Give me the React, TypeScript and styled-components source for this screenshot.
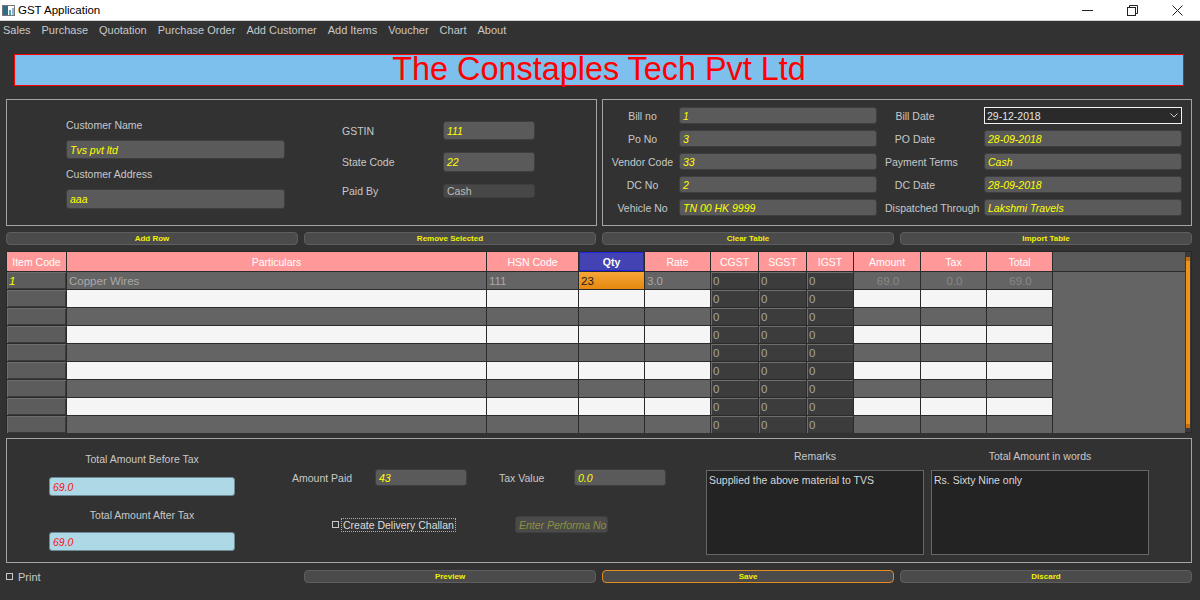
import React from 'react';
import styled, { createGlobalStyle } from 'styled-components';

const GlobalStyle = createGlobalStyle`
  html, body {
    margin: 0;
    padding: 0;
    background: #323232;
  }
  body {
    font-family: 'Liberation Sans', Arial, sans-serif;
  }
  * {
    box-sizing: border-box;
  }
`;

const Window = styled.div`
  width: 1200px;
  height: 600px;
  display: flex;
  flex-direction: column;
  background: #323232;
  overflow: hidden;
`;

/* ---------- title bar + menu ---------- */

const TitleBar = styled.div`
  height: 21px;
  flex-shrink: 0;
  background: #ffffff;
  border-bottom: 1px solid #d4d4d4;
  display: flex;
  align-items: center;
  padding-left: 2px;
`;

const TitleText = styled.span`
  font-size: 11.5px;
  color: #000;
  margin-left: 3px;
  flex: 1;
`;

const WinButton = styled.div`
  width: 45px;
  height: 20px;
  display: flex;
  align-items: center;
  justify-content: center;
  color: #111;
`;

const MenuBar = styled.nav`
  height: 17px;
  flex-shrink: 0;
  display: flex;
  align-items: center;
  gap: 11px;
  padding-left: 3px;
`;

const MenuItem = styled.span`
  font-size: 11px;
  color: #c8c8c8;
`;

/* ---------- page body ---------- */

const Main = styled.main`
  flex: 1;
  display: flex;
  flex-direction: column;
  padding: 16px 8px 0 6px;
`;

const Banner = styled.div`
  margin: 0 8px;
  height: 32px;
  background: #7dc0ee;
  border: 1px solid #ff0000;
  color: #ff0000;
  font-size: 32.4px;
  line-height: 29px;
  text-align: center;
  white-space: nowrap;
`;

const TopRow = styled.div`
  margin-top: 13px;
  display: grid;
  grid-template-columns: 591px 1fr;
  gap: 5px;
  height: 127px;
`;

const GroupBox = styled.section`
  border: 1px solid #a4a4a4;
  height: 100%;
`;

const CustomerPanel = styled(GroupBox)`
  display: flex;
  padding-left: 59px;
`;

const StackCol = styled.div<{ $w: number; $top: number }>`
  width: ${({ $w }) => $w}px;
  padding-top: ${({ $top }) => $top}px;
  display: flex;
  flex-direction: column;
`;

const Label = styled.span<{ $center?: boolean }>`
  font-size: 10.5px;
  line-height: 14px;
  color: #c8c8c8;
  white-space: nowrap;
  text-align: ${({ $center }) => ($center ? 'center' : 'left')};
`;

const Field = styled.div<{ $variant?: 'value' | 'plain' | 'blue' | 'hint'; $h?: number; $w?: number; $mt?: number }>`
  height: ${({ $h }) => $h ?? 17}px;
  width: ${({ $w }) => ($w ? `${$w}px` : 'auto')};
  margin-top: ${({ $mt }) => $mt ?? 0}px;
  flex-shrink: 0;
  display: flex;
  align-items: center;
  padding-left: 3px;
  font-size: 10.5px;
  white-space: nowrap;
  overflow: hidden;
  border-radius: 3px;
  border: 1px solid
    ${({ $variant }) => ($variant === 'blue' ? '#6f8a94' : '#3f3f3f')};
  background: ${({ $variant }) =>
    $variant === 'blue'
      ? '#add8e6'
      : $variant === 'plain'
        ? '#474747'
        : $variant === 'hint'
          ? '#4a4a4a'
          : '#5a5a5a'};
  color: ${({ $variant }) =>
    $variant === 'blue'
      ? '#ff1010'
      : $variant === 'plain'
        ? '#bdbdbd'
        : $variant === 'hint'
          ? '#8f8f3c'
          : '#ffff00'};
  font-style: ${({ $variant }) => ($variant === 'plain' ? 'normal' : 'italic')};
`;

const FormGrid = styled.div<{ $cols: string; $rows: string; $gap: number; $top: number }>`
  display: grid;
  grid-template-columns: ${({ $cols }) => $cols};
  grid-template-rows: ${({ $rows }) => $rows};
  row-gap: ${({ $gap }) => $gap}px;
  padding-top: ${({ $top }) => $top}px;
  align-items: center;
`;

const BillPanel = styled(GroupBox)`
  padding-left: 3px;
`;

const SideLabel = styled(Label)<{ $offset?: number; $w: number }>`
  display: block;
  width: ${({ $w }) => $w}px;
  margin-left: ${({ $offset }) => $offset ?? 0}px;
  text-align: center;
`;

const Combo = styled.div`
  height: 17px;
  border: 1px solid #f2f2f2;
  background: #2a2a2a;
  color: #e4e4e4;
  font-size: 10.5px;
  display: flex;
  align-items: center;
  justify-content: space-between;
  padding: 0 3px 0 2px;
`;

/* ---------- buttons ---------- */

const ButtonRow = styled.div`
  margin-top: 6px;
  display: grid;
  grid-template-columns: repeat(4, 1fr);
  gap: 6px;
  height: 13px;
  align-items: center;
`;

const ActionButton = styled.button<{ $focus?: boolean }>`
  height: 13px;
  padding: 0;
  border-radius: 4px;
  border: 1px solid ${({ $focus }) => ($focus ? '#e38b1f' : '#5e5e5e')};
  background: #4b4b4b;
  color: #f2f200;
  font-family: 'Liberation Sans', Arial, sans-serif;
  font-size: 8px;
  font-weight: 700;
  line-height: 11px;
`;

/* ---------- table ---------- */

const TableFrame = styled.div`
  margin-top: 6px;
  height: 182px;
  display: flex;
  border: 1px solid #2a2a2a;
  background: #2a2a2a;
`;

const Grid = styled.div`
  flex: 1;
  display: grid;
  grid-template-columns: 59px 419px 91px 65px 65px 47px 47px 46px 66px 65px 65px 1fr;
  grid-template-rows: 19px repeat(9, 17px);
  gap: 1px;
  background: #2b2b2b;
`;

const HeadCell = styled.div<{ $active?: boolean }>`
  display: flex;
  align-items: center;
  justify-content: center;
  font-size: 10.5px;
  color: #fff;
  background: ${({ $active }) => ($active ? '#4343b3' : '#ff9999')};
  font-weight: ${({ $active }) => ($active ? 700 : 400)};
  border: ${({ $active }) => ($active ? '1px solid #2323e6' : 'none')};
`;

const Filler = styled.div<{ $head?: boolean }>`
  background: ${({ $head }) => ($head ? '#5b5b5b' : '#646464')};
  grid-column: 12;
  grid-row: ${({ $head }) => ($head ? '1' : '2 / span 9')};
`;

const Cell = styled.div<{ $bg: string; $color?: string; $align?: string; $italic?: boolean; $inset?: boolean }>`
  display: flex;
  align-items: center;
  justify-content: ${({ $align }) => $align ?? 'flex-start'};
  padding-left: 2px;
  font-size: 11.5px;
  background: ${({ $bg }) => $bg};
  color: ${({ $color }) => $color ?? '#a8a8a8'};
  font-style: ${({ $italic }) => ($italic ? 'italic' : 'normal')};
  box-shadow: ${({ $inset }) => ($inset ? 'inset 1px 1px 0 #6e6e6e, inset -1px -1px 0 #3a3a3a' : 'none')};
`;

const ScrollTrack = styled.div`
  width: 6px;
  background: #3a3a3a;
  display: flex;
  padding: 3px 1px 2px;
`;

const ScrollThumb = styled.div`
  flex: 1;
  background: #f0921a;
  border-top: 2px solid #3a3a3a;
  border-bottom: 2px solid #3a3a3a;
  box-shadow: inset 0 4px 0 #c76f06, inset 0 -4px 0 #c76f06;
`;

/* ---------- totals ---------- */

const TotalsPanel = styled(GroupBox)`
  margin-top: 5px;
  height: 125px;
  display: flex;
  padding-left: 42px;
`;

const AmountRow = styled.div`
  display: flex;
  align-items: center;
  height: 17px;
`;

const ChallanRow = styled(AmountRow)`
  margin-top: 30px;
  padding-left: 40px;
`;

const CheckBox = styled.span`
  width: 7px;
  height: 7px;
  border: 1px solid #c8c8c8;
  flex-shrink: 0;
`;

const FocusLabel = styled.span`
  margin-left: 2px;
  border: 1px dotted #b0b0b0;
  font-size: 10.5px;
  line-height: 12px;
  padding: 0 1px;
  color: #dedede;
  white-space: nowrap;
`;

const TextArea = styled.div`
  margin-top: 7px;
  height: 85px;
  background: #232323;
  border: 1px solid #666;
  color: #d8d8d8;
  font-size: 10.5px;
  padding: 3px 2px;
`;

const FooterRow = styled.div`
  margin-top: 7px;
  display: grid;
  grid-template-columns: repeat(4, 1fr);
  gap: 6px;
  height: 13px;
  align-items: center;
`;

const PrintToggle = styled.div`
  display: flex;
  align-items: center;
  gap: 5px;
  font-size: 11px;
  color: #c8c8c8;
`;

const AppIcon = () => (
  <svg width="13" height="11" viewBox="0 0 13 11" aria-hidden="true">
    <rect x="0.5" y="0.5" width="12" height="10" fill="#fff" stroke="#777" />
    <rect x="1" y="1" width="5" height="9" fill="#2c6e8a" />
    <rect x="7" y="5" width="2" height="5" fill="#5aa0c0" />
    <rect x="10" y="3" width="2" height="7" fill="#8ab7c9" />
  </svg>
);

const Chevron = () => (
  <svg width="8" height="5" viewBox="0 0 8 5" aria-hidden="true">
    <path d="M0.5 0.5 L4 4 L7.5 0.5" fill="none" stroke="#c8c8c8" strokeWidth="1" />
  </svg>
);

const menu = ['Sales', 'Purchase', 'Quotation', 'Purchase Order', 'Add Customer', 'Add Items', 'Voucher', 'Chart', 'About'];

const billRows: [string, string, string, string][] = [
  ['Bill no', '1', 'Bill Date', '29-12-2018'],
  ['Po No', '3', 'PO Date', '28-09-2018'],
  ['Vendor Code', '33', 'Payment Terms', 'Cash'],
  ['DC No', '2', 'DC Date', '28-09-2018'],
  ['Vehicle No', 'TN 00 HK 9999', 'Dispatched Through', 'Lakshmi Travels'],
];

type Kind = 'code' | 'text' | 'qty' | 'spin' | 'num';
const columns: { title: string; kind: Kind }[] = [
  { title: 'Item Code', kind: 'code' },
  { title: 'Particulars', kind: 'text' },
  { title: 'HSN Code', kind: 'text' },
  { title: 'Qty', kind: 'qty' },
  { title: 'Rate', kind: 'text' },
  { title: 'CGST', kind: 'spin' },
  { title: 'SGST', kind: 'spin' },
  { title: 'IGST', kind: 'spin' },
  { title: 'Amount', kind: 'num' },
  { title: 'Tax', kind: 'num' },
  { title: 'Total', kind: 'num' },
];
const firstRow = ['1', 'Copper Wires', '111', '23', '3.0', '0', '0', '0', '69.0', '0.0', '69.0'];

const renderCell = (kind: Kind, row: number, col: number) => {
  const rowBg = row % 2 === 0 ? '#646464' : '#f5f5f5';
  const value = row === 0 ? firstRow[col] : '';
  const key = `${row}-${col}`;
  switch (kind) {
    case 'code':
      return (
        <Cell key={key} $bg="#5c5c5c" $color="#ffff00" $italic $inset>
          {value}
        </Cell>
      );
    case 'spin':
      return (
        <Cell key={key} $bg="#3c3c3c" $color="#a4a4a4" $inset>
          0
        </Cell>
      );
    case 'qty':
      return row === 0 ? (
        <Cell key={key} $bg="linear-gradient(#f6a638, #e5880f)" $color="#1c1c1c">
          {value}
        </Cell>
      ) : (
        <Cell key={key} $bg={rowBg} />
      );
    case 'num':
      return (
        <Cell key={key} $bg={rowBg} $color="#888" $align="center">
          {value}
        </Cell>
      );
    default:
      return (
        <Cell key={key} $bg={rowBg}>
          {value}
        </Cell>
      );
  }
};

const App: React.FC = () => (
  <Window>
    <GlobalStyle />
    <TitleBar>
      <AppIcon />
      <TitleText>GST Application</TitleText>
      <WinButton>
        <svg width="11" height="1" aria-hidden="true">
          <rect width="11" height="1" fill="#222" />
        </svg>
      </WinButton>
      <WinButton>
        <svg width="11" height="11" viewBox="0 0 11 11" aria-hidden="true">
          <rect x="0.5" y="2.5" width="8" height="8" fill="none" stroke="#222" />
          <path d="M2.5 2.5 V0.5 H10.5 V8.5 H8.5" fill="none" stroke="#222" />
        </svg>
      </WinButton>
      <WinButton>
        <svg width="11" height="11" viewBox="0 0 11 11" aria-hidden="true">
          <path d="M0.5 0.5 L10.5 10.5 M10.5 0.5 L0.5 10.5" stroke="#222" strokeWidth="1" />
        </svg>
      </WinButton>
    </TitleBar>

    <MenuBar>
      {menu.map((m) => (
        <MenuItem key={m}>{m}</MenuItem>
      ))}
    </MenuBar>

    <Main>
      <Banner>The Constaples Tech Pvt Ltd</Banner>

      <TopRow>
        <CustomerPanel>
          <StackCol $w={219} $top={18}>
            <Label>Customer Name</Label>
            <Field $h={19} $mt={8}>Tvs pvt ltd</Field>
            <Label style={{ marginTop: 8 }}>Customer Address</Label>
            <Field $h={20} $mt={8}>aaa</Field>
          </StackCol>
          <StackCol $w={200} $top={21} style={{ marginLeft: 57 }}>
            <FormGrid $cols="101px 92px" $rows="19px 20px 14px" $gap={12} $top={0}>
              <Label>GSTIN</Label>
              <Field $h={19}>111</Field>
              <Label>State Code</Label>
              <Field $h={20}>22</Field>
              <Label>Paid By</Label>
              <Field $h={14} $variant="plain">Cash</Field>
            </FormGrid>
          </StackCol>
        </CustomerPanel>

        <BillPanel>
          <FormGrid $cols="73px 198px 107px 198px" $rows="repeat(5, 17px)" $gap={6} $top={7}>
            {billRows.map(([l1, v1, l2, v2]) => (
              <React.Fragment key={l1}>
                <SideLabel $w={73}>{l1}</SideLabel>
                <Field>{v1}</Field>
                <SideLabel $w={60} $offset={8}>{l2}</SideLabel>
                {l2 === 'Bill Date' ? (
                  <Combo>
                    <span>{v2}</span>
                    <Chevron />
                  </Combo>
                ) : (
                  <Field>{v2}</Field>
                )}
              </React.Fragment>
            ))}
          </FormGrid>
        </BillPanel>
      </TopRow>

      <ButtonRow>
        <ActionButton>Add Row</ActionButton>
        <ActionButton>Remove Selected</ActionButton>
        <ActionButton>Clear Table</ActionButton>
        <ActionButton>Import Table</ActionButton>
      </ButtonRow>

      <TableFrame>
        <Grid>
          {columns.map((c) => (
            <HeadCell key={c.title} $active={c.kind === 'qty'}>
              {c.title}
            </HeadCell>
          ))}
          <Filler $head />
          {Array.from({ length: 9 }, (_, r) => columns.map((c, i) => renderCell(c.kind, r, i)))}
          <Filler />
        </Grid>
        <ScrollTrack>
          <ScrollThumb />
        </ScrollTrack>
      </TableFrame>

      <TotalsPanel>
        <StackCol $w={186} $top={13}>
          <Label $center>Total Amount Before Tax</Label>
          <Field $variant="blue" $h={19} $mt={11}>69.0</Field>
          <Label $center style={{ marginTop: 12 }}>Total Amount After Tax</Label>
          <Field $variant="blue" $h={19} $mt={10}>69.0</Field>
        </StackCol>

        <StackCol $w={374} $top={30} style={{ marginLeft: 57 }}>
          <AmountRow>
            <Label style={{ width: 83 }}>Amount Paid</Label>
            <Field $w={92}>43</Field>
            <Label style={{ width: 75, marginLeft: 32 }}>Tax Value</Label>
            <Field $w={92}>0.0</Field>
          </AmountRow>
          <ChallanRow>
            <CheckBox />
            <FocusLabel>Create Delivery Challan</FocusLabel>
            <Field $variant="hint" $w={93} style={{ marginLeft: 59 }}>
              Enter Performa No
            </Field>
          </ChallanRow>
        </StackCol>

        <StackCol $w={218} $top={10} style={{ marginLeft: 40 }}>
          <Label $center>Remarks</Label>
          <TextArea>Supplied the above material to TVS</TextArea>
        </StackCol>

        <StackCol $w={218} $top={10} style={{ marginLeft: 7 }}>
          <Label $center>Total Amount in words</Label>
          <TextArea>Rs. Sixty Nine only</TextArea>
        </StackCol>
      </TotalsPanel>

      <FooterRow>
        <PrintToggle>
          <CheckBox />
          Print
        </PrintToggle>
        <ActionButton>Preview</ActionButton>
        <ActionButton $focus>Save</ActionButton>
        <ActionButton>Discard</ActionButton>
      </FooterRow>
    </Main>
  </Window>
);

export default App;
